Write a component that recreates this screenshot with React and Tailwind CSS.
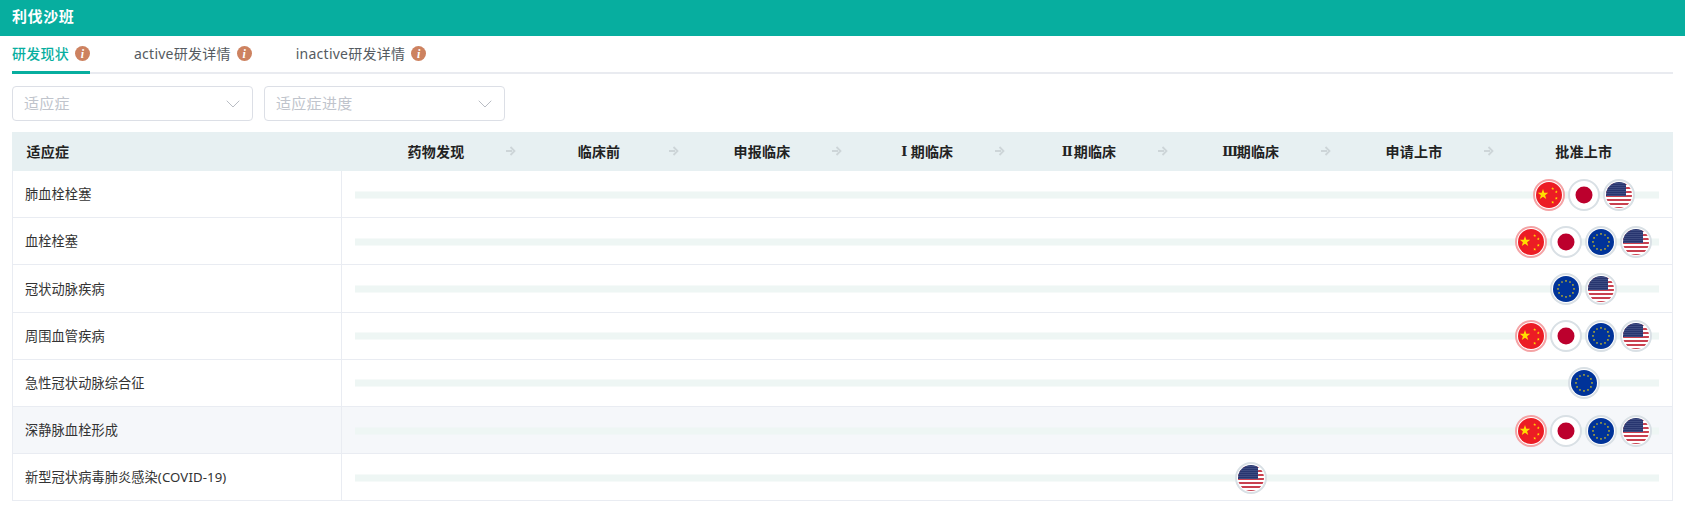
import { ChevronDown } from "lucide-react";

const stages = [
  { roman: "", label: "药物发现" },
  { roman: "", label: "临床前" },
  { roman: "", label: "申报临床" },
  { roman: "Ⅰ", label: "期临床" },
  { roman: "Ⅱ", label: "期临床" },
  { roman: "Ⅲ", label: "期临床" },
  { roman: "", label: "申请上市" },
  { roman: "", label: "批准上市" },
];

const rows = [
  { name: "肺血栓栓塞", flags: ["cn", "jp", "us"], col: 8 },
  { name: "血栓栓塞", flags: ["cn", "jp", "eu", "us"], col: 8 },
  { name: "冠状动脉疾病", flags: ["eu", "us"], col: 8 },
  { name: "周围血管疾病", flags: ["cn", "jp", "eu", "us"], col: 8 },
  { name: "急性冠状动脉综合征", flags: ["eu"], col: 8 },
  { name: "深静脉血栓形成", flags: ["cn", "jp", "eu", "us"], col: 8, hover: true },
  { name: "新型冠状病毒肺炎感染(COVID-19)", flags: ["us"], col: 6 },
];

function InfoIcon() {
  return (
    <span className="ml-[6px] inline-flex h-[15px] w-[15px] items-center justify-center rounded-full bg-[#cd8260] font-['Liberation_Serif',serif] text-[12px] font-bold italic leading-none text-white">
      i
    </span>
  );
}

function Tab({ label, active, className }) {
  return (
    <div
      className={`-mb-[2px] flex h-[38px] items-center border-b-[3px] tracking-[0.25px] ${
        active ? "border-[#07ae9f] font-medium text-[#07ae9f]" : "border-transparent text-[#555b61]"
      } ${className || ""}`}
    >
      {label}
      <InfoIcon />
    </div>
  );
}

function Select({ label }) {
  return (
    <div className="flex h-[35px] w-[241px] items-center justify-between rounded-[4px] border border-[#dcdfe6] pl-[11px] pr-[7px] text-[15px] tracking-[0.3px] text-[#c0c4cc]">
      <span>{label}</span>
      <ChevronDown size={24} strokeWidth={1} className="text-[#b9bdc4]" />
    </div>
  );
}

function Arrow() {
  return (
    <svg width="10" height="10" viewBox="0 0 10 10" fill="none" stroke="#cdd5d8" strokeWidth="1.8" className="absolute right-[2px] top-1/2 -mt-[6px]">
      <path d="M0 5h6M4.5 1l4 4-4 4" />
    </svg>
  );
}

function Star({ x, y, r, fill = "#ffde00" }) {
  const pts = [];
  for (let i = 0; i < 10; i++) {
    const a = -Math.PI / 2 + (i * Math.PI) / 5;
    const rad = i % 2 === 0 ? r : r * 0.4;
    pts.push(`${x + rad * Math.cos(a)},${y + rad * Math.sin(a)}`);
  }
  return <polygon points={pts.join(" ")} fill={fill} />;
}

function FlagArt({ code }) {
  if (code === "cn") {
    return (
      <>
        <rect width="26" height="26" fill="#ec1c24" />
        <Star x={7} y={12.5} r={5.5} />
        <Star x={16.7} y={6.7} r={1.6} />
        <Star x={20.3} y={9.9} r={1.6} />
        <Star x={20.3} y={16.3} r={1.6} />
        <Star x={16.7} y={20.3} r={1.6} />
      </>
    );
  }
  if (code === "jp") {
    return (
      <>
        <rect width="26" height="26" fill="#fff" />
        <circle cx="13" cy="13" r="8.5" fill="#bc002d" />
      </>
    );
  }
  if (code === "eu") {
    const stars = [];
    for (let i = 0; i < 12; i++) {
      const a = (i * Math.PI) / 6;
      stars.push(<Star key={i} x={13 + 8 * Math.cos(a)} y={13 + 8 * Math.sin(a)} r={1.2} />);
    }
    return (
      <>
        <rect width="26" height="26" fill="#003399" />
        {stars}
      </>
    );
  }
  const dots = [];
  for (let y = 1.5; y < 14; y += 2) {
    for (let x = 1; x < 20; x += 2) {
      dots.push(<circle key={`${x}-${y}`} cx={x + (y % 4 > 2 ? 0 : 1)} cy={y} r="0.4" fill="#8f9cc4" />);
    }
  }
  return (
    <>
      <rect width="26" height="26" fill="#fff" />
      {[1, 5, 9, 13, 17, 21, 25].map((y) => (
        <rect key={y} x="0" y={y} width="26" height="2" fill="#c9404f" />
      ))}
      <rect width="20" height="14" fill="#27356f" />
      {dots}
    </>
  );
}

function Flag({ code, id }) {
  const ring = code === "cn" ? "border-[#f4a3a5]" : "border-[#d9e0e5]";
  return (
    <span className={`flex h-[32px] w-[32px] shrink-0 items-center justify-center rounded-full border-2 bg-white ${ring}`}>
      <svg width="26" height="26" viewBox="0 0 26 26">
        <clipPath id={id}>
          <circle cx="13" cy="13" r="13" />
        </clipPath>
        <g clipPath={`url(#${id})`}>
          <FlagArt code={code} />
        </g>
      </svg>
    </span>
  );
}

export default function App() {
  return (
    <div className="min-h-[511px] w-[1685px] bg-white font-['Noto_Sans','Noto_Sans_CJK_SC',sans-serif]">
      <div className="flex h-[36px] items-center bg-[#07ae9f] pb-[4px] pl-[12px] text-[15px] font-bold tracking-[0.6px] text-white">利伐沙班</div>

      <div className="px-[12px]">
        {/* tabs */}
        <div className="flex h-[38px] border-b-2 border-[#e9ebf0] text-[14px]">
          <Tab label="研发现状" active />
          <Tab label="active研发详情" className="ml-[44px]" />
          <Tab label="inactive研发详情" className="ml-[44px]" />
        </div>

        {/* filters */}
        <div className="mt-[12px] flex gap-[11px]">
          <Select label="适应症" />
          <Select label="适应症进度" />
        </div>

        {/* table */}
        <div className="mt-[11px] w-[1661px]">
          <div className="flex h-[39px] items-center bg-[#e7f0f2] text-[14px] font-bold tracking-[0.2px] text-[#222]">
            <div className="w-[330px] shrink-0 pl-[14.5px]">适应症</div>
            <div className="grid flex-1 grid-cols-[repeat(7,163px)_1fr] pl-[12.5px] pr-[1px]">
              {stages.map((s, i) => (
                <div key={i} className="relative flex items-center justify-center">
                  {s.roman && <span className="flex w-[14px] justify-center font-['DejaVu_Serif',serif] text-[13px] tracking-[-1px]">{s.roman}</span>}
                  {s.label}
                  {i < 7 && <Arrow />}
                </div>
              ))}
            </div>
          </div>

          {rows.map((r, i) => (
            <div key={r.name} className={`flex h-[47.2px] border-x border-b border-[#e9ecf2] text-[13.2px] tracking-[0.1px] text-[#333] ${r.hover ? "bg-[#f5f7fa]" : ""}`}>
              <div className="flex w-[329px] shrink-0 items-center border-r border-[#e9ecf2] pl-[12px] pt-[2px]">{r.name}</div>
              <div className="relative grid flex-1 grid-cols-[repeat(7,163px)_1fr] items-center pl-[12.5px] pt-[1px]">
                <div className="absolute left-[13px] right-[13px] top-1/2 mt-[0.5px] h-[7px] -translate-y-1/2 bg-[#eef6f4]" />
                <div className={`relative flex items-center justify-center gap-[3px] ${r.col === 8 ? "col-start-8" : "col-start-6"}`}>
                  {r.flags.map((f) => (
                    <Flag key={f} code={f} id={`c${i}${f}`} />
                  ))}
                </div>
              </div>
            </div>
          ))}
        </div>
      </div>
    </div>
  );
}
